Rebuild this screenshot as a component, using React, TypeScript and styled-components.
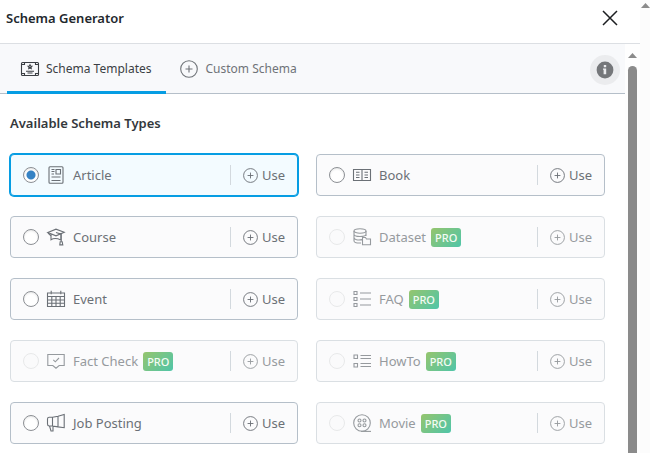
import React from "react";
import styled, { createGlobalStyle, css } from "styled-components";

const GlobalStyle = createGlobalStyle`
  *, *::before, *::after { box-sizing: border-box; }
  body {
    margin: 0;
    background: #fff;
    color: #6b7076;
    font-family: "Noto Sans", "Segoe UI", sans-serif;
    font-size: 13px;
    line-height: 20px;
  }
  button, input { font: inherit; color: inherit; }
  svg { display: block; flex: none; }
`;

const Window = styled.div`
  display: flex;
  min-height: 100vh;
`;

const Dialog = styled.section`
  flex: 1;
  min-width: 0;
  display: flex;
  flex-direction: column;
`;

const Header = styled.header`
  display: flex;
  align-items: center;
  justify-content: space-between;
  height: 44px;
  padding: 0 20px 7px 6px;
  border-bottom: 1px solid #dcdfe3;
`;

const Title = styled.h1`
  margin: 0;
  font-size: 13px;
  font-weight: 600;
  color: #23282d;
`;

const CloseButton = styled.button`
  display: flex;
  padding: 0;
  border: 0;
  background: none;
  color: #1d1f21;
`;

const Body = styled.div`
  flex: 1;
  display: flex;
`;

const Content = styled.main`
  flex: 1;
  min-width: 0;
`;

const TabBar = styled.nav`
  display: flex;
  align-items: center;
  height: 50px;
  padding: 0 5px 0 7px;
  background: #f8f9fb;
  border-bottom: 1px solid #b5bfc9;
`;

const Tab = styled.button<{ $active?: boolean }>`
  display: flex;
  align-items: center;
  gap: 7px;
  height: 50px;
  padding: 3px 15px 0 14px;
  margin-bottom: -1px;
  border: 0;
  border-bottom: 3px solid ${(p) => (p.$active ? "#069de3" : "transparent")};
  background: none;
  color: ${(p) => (p.$active ? "#3b3f44" : "#6f7378")};
  font-size: 12px;
`;

const InfoButton = styled.button`
  display: flex;
  align-items: center;
  justify-content: center;
  width: 30px;
  height: 30px;
  margin: 3px 0 0 auto;
  padding: 0;
  border: 0;
  border-radius: 50%;
  background: #ebecee;
`;

const Types = styled.section`
  padding: 19px 20px 9px 10px;
`;

const Heading = styled.h2`
  margin: 0 0 21px;
  font-size: 13px;
  font-weight: 600;
  color: #34383c;
`;

const Grid = styled.div`
  display: grid;
  grid-template-columns: 288fr 289fr;
  gap: 20px 18px;
`;

const Card = styled.div<{ $selected?: boolean; $pro?: boolean }>`
  display: flex;
  align-items: center;
  height: 42px;
  padding: 0 12px;
  border: 1px solid #b5bfc9;
  border-radius: 4px;
  background: #fbfbfc;
  ${(p) =>
    p.$selected &&
    css`
      border-color: #069de3;
      box-shadow: 0 0 0 1px #069de3;
      background: #f3fbff;
    `}
  ${(p) =>
    p.$pro &&
    css`
      border-color: #dadfe3;
      color: #969a9e;
    `}
`;

const Choice = styled.label`
  flex: 1;
  min-width: 0;
  display: flex;
  align-items: center;
  gap: 8px;
`;

const Radio = styled.input`
  appearance: none;
  flex: none;
  width: 16px;
  height: 16px;
  margin: 0;
  border: 1px solid #8c8f94;
  border-radius: 50%;
  background: #fff;
  box-shadow: inset 0 1px 2px rgba(0, 0, 0, 0.1);
  &:checked {
    background: radial-gradient(circle, #3582c4 0 4px, #fff 5px);
  }
  &:disabled {
    border-color: #e8e9ea;
    background: #fafafb;
    box-shadow: none;
  }
`;

const Pro = styled.span`
  padding: 0 4px;
  margin-left: -3px;
  border-radius: 3px;
  background: linear-gradient(135deg, #96c56d, #4fc5a9);
  color: #f4fbf4;
  font-size: 11px;
  font-weight: 500;
  line-height: 19px;
`;

const UseButton = styled.button`
  display: flex;
  align-items: center;
  gap: 4px;
  height: 20px;
  padding: 0 0 0 12px;
  border: 0;
  border-left: 1px solid #d3d9de;
  background: none;
`;

const Track = styled.div<{ $wide?: boolean }>`
  flex: none;
  display: flex;
  flex-direction: column;
  align-items: center;
  width: ${(p) => (p.$wide ? "15px" : "10px")};
  padding-top: ${(p) => (p.$wide ? "9px" : "3px")};
  background: ${(p) => (p.$wide ? "#fefefe" : "#fcfcfc")};
  color: #8b8b8b;
`;

const Thumb = styled.div`
  flex: 1;
  width: 9px;
  margin-top: 8px;
  border-radius: 5px 5px 0 0;
  background: #8b8b8b;
`;

const drawings = {
  template: (
    <>
      <rect x="0.5" y="2.5" width="17" height="13" rx="1" />
      <path d="M3.5 2.5v2h-3M14.5 2.5v2h3M3.5 15.5v-2h-3M14.5 15.5v-2h3M5 11.2h8M6.5 13h5" />
      <path d="M9 4.8l.6 1.2 1.4.2-1 1 .2 1.3L9 7.9l-1.2.6.2-1.3-1-1 1.4-.2z" />
    </>
  ),
  plus: (
    <>
      <circle cx="9" cy="9" r="8.3" />
      <path d="M9 5.5v7M5.5 9h7" />
    </>
  ),
  article: (
    <>
      <rect x="2" y="0.7" width="14" height="16.6" rx="1" />
      <path d="M4.5 3.5h3M4.5 5.5h3M4.5 8h2.5M9 3.5h4.5v4.5H9zM4.5 11h9M4.5 14.5h9" />
    </>
  ),
  book: (
    <>
      <path d="M0.5 3.5h17v11h-17zM9 3.5v11.5" />
      <path d="M3 6.2h3.5M3 9h3.5M3 11.5h3.5M11.5 6.2H15M11.5 9H15M11.5 11.5H15" />
    </>
  ),
  course: (
    <>
      <path d="M0.8 4.6L9 1.2l8.2 3.1L9 7.8zM4 6.2v5.5c2.5-1.5 6-1.5 9.8.2V6.3M9 4.5l5.3 1.6v7.4" />
      <path d="M12.8 16.9l.4-3.2h2l.6 3.2zM1 5l3 2.8" />
    </>
  ),
  dataset: (
    <>
      <ellipse cx="7" cy="3" rx="6" ry="2.2" />
      <path d="M1 3v10c0 1.5 3 2.3 7 2M13 3v5M1 6.3c0 3 12 3 12 0M1 9.6c0 2 4 3 8 2M9.5 16.8V9.5h3l1 1.5h4v5.8z" />
    </>
  ),
  event: (
    <path d="M0.5 3h17v13.5h-17zM0.5 6.5h17M0.5 10h17M0.5 13.2h17M4.8 6.5v10M9 6.5v10M13.2 6.5v10M4.2 0.8v3.5M13.8 0.8v3.5" />
  ),
  faq: (
    <path d="M1 1.5h3v3H1zM1 7.5h3v3H1zM1 13.5h3v3H1zM7 3h11M7 9h11M7 15h11" />
  ),
  fact: <path d="M0.8 2.5h16.4v11h-5L9 16.2l-3.2-2.7h-5zM6.3 7.8l2 2L12 6" />,
  howto: (
    <path d="M1 3h3.5v3.5H1zM1 11.5h3.5v3.5H1zM7.5 3.5H18M7.5 6.5H18M7.5 11.5H18M7.5 14.5H18" />
  ),
  job: (
    <path d="M5.5 3.3L11 2.3L17.2.5v13.2L11 12.9L5.5 12zM5.5 3.3H2.2c-1.2 0-1.7.7-1.7 1.7v5c0 1.2.5 2 1.7 2h3.3M2.5 12l1.5 5h2v-5M11 2.3v10.6" />
  ),
  movie: (
    <>
      <circle cx="9" cy="9" r="8.3" />
      <circle cx="6.5" cy="6.5" r="1.5" />
      <circle cx="11.5" cy="6.5" r="1.5" />
      <circle cx="6.5" cy="11.3" r="1.5" />
      <circle cx="11.5" cy="11.3" r="1.5" />
      <path d="M8 17.4h10" />
    </>
  ),
};

type Drawing = keyof typeof drawings;

function Icon({ name, size = 18 }: { name: Drawing; size?: number }) {
  return (
    <svg
      width={size}
      height={size}
      viewBox="0 0 18 18"
      fill="none"
      stroke="currentColor"
      strokeWidth="1.1"
      overflow="visible"
      aria-hidden="true"
    >
      {drawings[name]}
    </svg>
  );
}

function Arrow() {
  return (
    <svg width="9" height="5" viewBox="0 0 9 5" fill="currentColor" aria-hidden="true">
      <path d="M0 5L4.5 0L9 5z" />
    </svg>
  );
}

const types: { name: string; icon: Drawing; pro?: boolean }[] = [
  { name: "Article", icon: "article" },
  { name: "Book", icon: "book" },
  { name: "Course", icon: "course" },
  { name: "Dataset", icon: "dataset", pro: true },
  { name: "Event", icon: "event" },
  { name: "FAQ", icon: "faq", pro: true },
  { name: "Fact Check", icon: "fact", pro: true },
  { name: "HowTo", icon: "howto", pro: true },
  { name: "Job Posting", icon: "job" },
  { name: "Movie", icon: "movie", pro: true },
];

export default function App() {
  const [selected, setSelected] = React.useState("Article");
  return (
    <>
      <GlobalStyle />
      <Window>
        <Dialog>
          <Header>
            <Title>Schema Generator</Title>
            <CloseButton aria-label="Close">
              <svg width="20" height="20" viewBox="0 0 20 20" fill="none" stroke="currentColor" strokeWidth="1.5">
                <path d="M3 3l14 14M17 3L3 17" />
              </svg>
            </CloseButton>
          </Header>
          <Body>
            <Content>
              <TabBar>
                <Tab $active>
                  <Icon name="template" />
                  Schema Templates
                </Tab>
                <Tab>
                  <Icon name="plus" />
                  Custom Schema
                </Tab>
                <InfoButton aria-label="Information">
                  <svg width="18" height="18" viewBox="0 0 18 18">
                    <circle cx="9" cy="9" r="8.4" fill="#75777a" />
                    <path d="M7.8 4h2.4v2.2H7.8zM7 7.4h3.2v5.8H7.6V8.8H7z" fill="#ebecee" />
                  </svg>
                </InfoButton>
              </TabBar>
              <Types>
                <Heading>Available Schema Types</Heading>
                <Grid>
                  {types.map((t) => (
                    <Card key={t.name} $selected={selected === t.name} $pro={t.pro}>
                      <Choice>
                        <Radio
                          type="radio"
                          name="schema-type"
                          checked={selected === t.name}
                          disabled={t.pro}
                          onChange={() => setSelected(t.name)}
                        />
                        <Icon name={t.icon} />
                        {t.name}
                        {t.pro && <Pro>PRO</Pro>}
                      </Choice>
                      <UseButton disabled={t.pro}>
                        <Icon name="plus" size={15} />
                        Use
                      </UseButton>
                    </Card>
                  ))}
                </Grid>
              </Types>
            </Content>
            <Track $wide>
              <Arrow />
              <Thumb />
            </Track>
          </Body>
        </Dialog>
        <Track>
          <Arrow />
        </Track>
      </Window>
    </>
  );
}
